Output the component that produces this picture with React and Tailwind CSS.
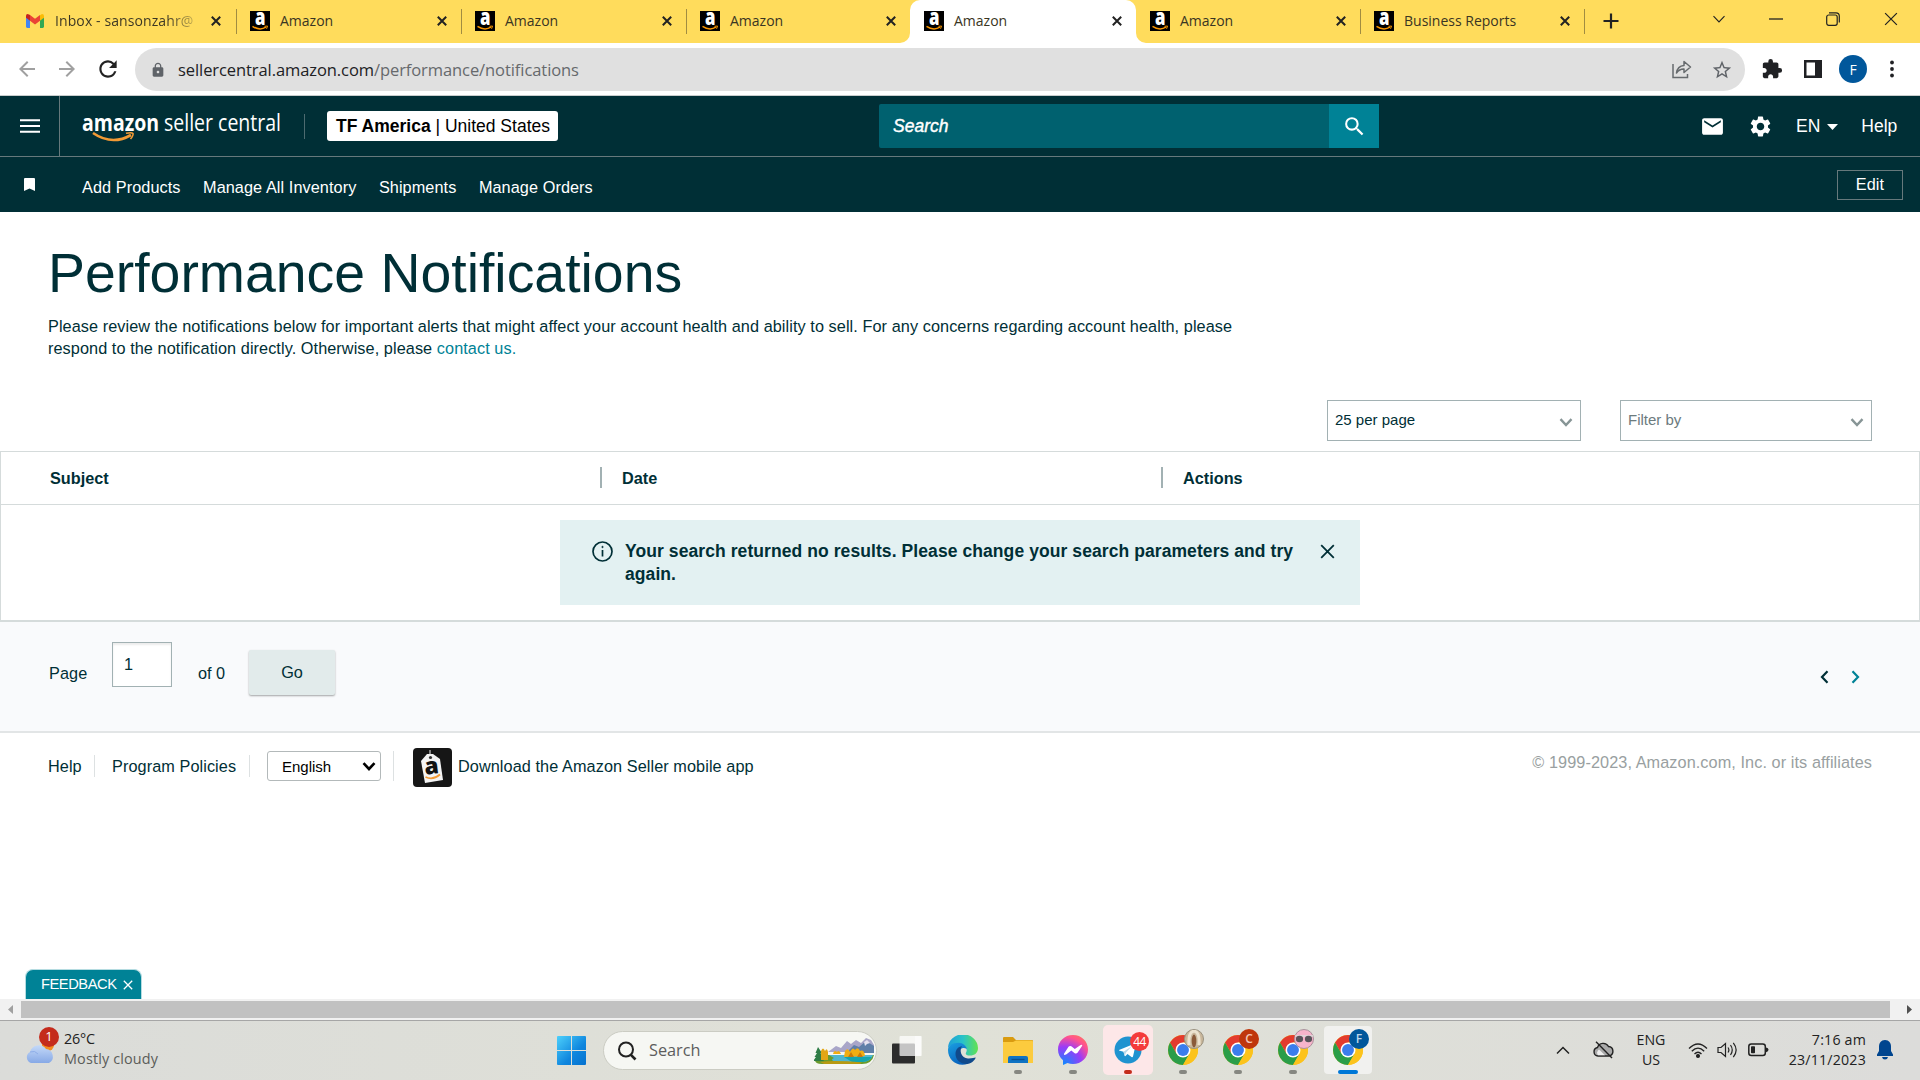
import React from 'react';
import {
  MdArrowBack,
  MdArrowForward,
  MdRefresh,
  MdLock,
  MdStarBorder,
  MdExtension,
  MdEmail,
  MdSettings,
  MdSearch,
} from 'react-icons/md';

const tabs = [
  { title: 'Amazon', width: 'w-[225px]', divider: true },
  { title: 'Amazon', width: 'w-[225px]', divider: true },
  { title: 'Amazon', width: 'w-[224px]' },
  { title: 'Amazon', width: 'w-[226px]', active: true },
  { title: 'Amazon', width: 'w-[224px]', divider: true },
  { title: 'Business Reports', width: 'w-[224px]', divider: true },
];

const quickLinks = ['Add Products', 'Manage All Inventory', 'Shipments', 'Manage Orders'];

const CloseIcon = ({ size = 10, stroke = 2, className = '' }) => (
  <svg width={size} height={size} viewBox="0 0 10 10" className={className}>
    <path d="M0.8 0.8L9.2 9.2M9.2 0.8L0.8 9.2" stroke="currentColor" strokeWidth={stroke} fill="none" />
  </svg>
);

const Chevron = ({ className = '', stroke = 2.4 }) => (
  <svg width="14" height="9" viewBox="0 0 14 9" className={className}>
    <path d="M1.5 1.2L7 7L12.5 1.2" stroke="currentColor" strokeWidth={stroke} fill="none" />
  </svg>
);

const GmailIcon = () => (
  <svg width="18" height="14" viewBox="0 0 18 14" className="shrink-0">
    <path d="M0 2V12.6Q0 14 1.3 14H4V6Z" fill="#4285f4" />
    <path d="M18 2V12.6Q18 14 16.700 14H14V6Z" fill="#34a853" />
    <path d="M14 1.300V6.700L18 3.700V2Q18 0 16 0Z" fill="#fbbc04" />
    <path d="M4 6.700V1L9 4.800L14 1V6.700L9 10.500Z" fill="#ea4335" />
    <path d="M0 2V3.700L4 6.700V1L3 .4Q0-.8 0 2Z" fill="#c5221f" />
  </svg>
);

const AmazonFavicon = () => (
  <svg width="20" height="20" viewBox="0 0 20 20" className="shrink-0 overflow-visible">
    <rect width="20" height="20" fill="#000" />
    <text x="5" y="14" textLength="10.5" lengthAdjust="spacingAndGlyphs" fontFamily="Open Sans, sans-serif" fontWeight="800" fontSize="22" fill="#fff">a</text>
    <path d="M2.500 15.300Q9.500 20 16 16.200" stroke="#f79400" strokeWidth="1.500" fill="none" />
    <path d="M14.500 15.300L17.500 15L16.600 17.800" stroke="#f79400" strokeWidth="1" fill="none" />
  </svg>
);

const ChromeIcon = () => (
  <svg width="30" height="30" viewBox="0 0 48 48">
    <circle cx="24" cy="24" r="24" fill="#fbc116" />
    <path d="M24 24L13.610 30L3.220 12A24 24 0 0 1 44.780 12H24Z" fill="#e33b2e" />
    <path d="M24 24L34.400 30L24 48A24 24 0 0 1 3.220 12L13.610 30Z" fill="#2a9d48" />
    <path d="M24 12H44.780A24 24 0 0 1 24 48L34.400 30Z" fill="#fcc31c" />
    <circle cx="24" cy="24" r="12" fill="#fff" />
    <circle cx="24" cy="24" r="9.500" fill="#3b7ded" />
  </svg>
);

const BrowserTabs = () => (
  <div className="flex h-[43px] bg-[#ffdc5c] text-[14px] text-[#3a3523]">
    <div className="flex h-[42px] w-[236px] items-center pl-[26px]">
      <GmailIcon />
      <span className="-mt-[2px] ml-[11px] w-[139px] overflow-hidden whitespace-nowrap bg-gradient-to-r from-[#3a3523] from-80% to-[#c9b050] bg-clip-text tracking-[0.1px] text-transparent">
        Inbox - sansonzahr@
      </span>
      <CloseIcon className="ml-[17px] text-[#222]" />
    </div>
    <div className="-mr-px mt-[9px] h-[25px] w-px bg-[#a18c41]" />
    {tabs.map((tab, i) => (
      <div key={i} className={`relative flex h-[43px] ${tab.width} ${tab.active ? 'rounded-t-[10px] bg-white' : ''}`}>
        {tab.active && (
          <>
            <svg width="10" height="10" className="absolute -left-[10px] bottom-0"><path d="M10 0V10H0A10 10 0 0 0 10 0Z" fill="#fff" /></svg>
            <svg width="10" height="10" className="absolute -right-[10px] bottom-0"><path d="M0 0V10H10A10 10 0 0 1 0 0Z" fill="#fff" /></svg>
          </>
        )}
        <div className="flex h-[42px] flex-1 items-center pl-[14px]">
          <AmazonFavicon />
          <span className="-mt-[2px] ml-[10px] flex-1 whitespace-nowrap">{tab.title}</span>
          <CloseIcon className="mr-[14px] text-[#222]" />
        </div>
        <div className={`-mr-px mt-[9px] h-[25px] w-px ${tab.divider ? 'bg-[#a18c41]' : ''}`} />
      </div>
    ))}
    <svg width="16" height="16" viewBox="0 0 16 16" className="ml-[19px] mt-[13px]">
      <path d="M8 0.500V15.500M0.500 8H15.500" stroke="#222" strokeWidth="2.200" />
    </svg>
    <div className="ml-auto flex h-[38px] items-center text-[#222]">
      <Chevron stroke={1.100} />
      <svg width="14" height="2" className="ml-[43px]"><path d="M0 1H14" stroke="#222" strokeWidth="1.300" /></svg>
      <svg width="14" height="14" viewBox="0 0 14 14" className="ml-[43px]" fill="none" stroke="#222" strokeWidth="1.200">
        <rect x="0.700" y="3" width="10.500" height="10.300" rx="2" />
        <path d="M3 0.800H10Q13.300 0.800 13.300 4V10.500" />
      </svg>
      <CloseIcon size={14} stroke={0.900} className="ml-[44px] mr-[22px]" />
    </div>
  </div>
);

const AddressBar = () => (
  <div className="flex h-[53px] items-start border-b border-[#c9cdcd] bg-white pt-[5px]">
    <div className="flex h-[41px] w-[135px] items-center pl-[15px]">
      <MdArrowBack size={24} className="text-[#a0a0a0]" />
      <MdArrowForward size={24} className="ml-[16px] text-[#a0a0a0]" />
      <MdRefresh size={26} className="ml-[16px] text-[#222]" />
    </div>
    <div className="flex h-[43px] w-[1610px] items-center rounded-full bg-[#e0e0e0] pl-[15px]">
      <MdLock size={16} className="text-[#5f6368]" />
      <span className="ml-[12px] mt-[1px] text-[16.5px] tracking-[-0.08px] text-[#202124]">
        sellercentral.amazon.com<span className="text-[#66696c]">/performance/notifications</span>
      </span>
      <svg width="20" height="19" viewBox="0 0 20 19" className="ml-auto" fill="none" stroke="#666a6d" strokeWidth="1.500">
        <path d="M1 4V17.500H15.500V14" />
        <path d="M4.500 13Q5.500 6 12 5.500V1.500L18.500 7L12 12.500V9Q7.500 8.800 4.500 13Z" strokeLinejoin="round" />
      </svg>
      <MdStarBorder size={22} className="ml-[19px] mr-[12px] text-[#5f6368]" />
    </div>
    <div className="flex h-[42px] items-center">
      <MdExtension size={22} className="ml-[16px] text-[#202124]" />
      <svg width="18" height="18" viewBox="0 0 18 18" className="ml-[21px]">
        <path d="M0 0H18V18H0ZM2.500 2.500V15.500H11V2.500Z" fill="#202124" fillRule="evenodd" />
      </svg>
      <div className="ml-[17px] flex size-[28px] items-center justify-center rounded-full bg-[#01579b] text-[14px] text-white">F</div>
      <svg width="4" height="18" viewBox="0 0 4 18" className="ml-[23px]" fill="#202124">
        <circle cx="2" cy="2.500" r="1.900" />
        <circle cx="2" cy="9" r="1.900" />
        <circle cx="2" cy="15.500" r="1.900" />
      </svg>
    </div>
  </div>
);

const SellerLogo = () => (
  <svg width="200" height="40" viewBox="0 0 200 40" className="shrink-0 overflow-visible">
    <text x="0" y="25" textLength="77" lengthAdjust="spacingAndGlyphs" fontFamily="Open Sans, sans-serif" fontWeight="700" fontSize="24" fill="#fff">amazon</text>
    <text x="82" y="25" textLength="117" lengthAdjust="spacingAndGlyphs" fontFamily="Open Sans, sans-serif" fontSize="24" fill="#fff">seller central</text>
    <path d="M11 27Q30 40 49 29" stroke="#f29a35" strokeWidth="2.600" fill="none" />
    <path d="M44 27.300Q50 26 51 27.500Q51.500 29.500 48.500 33" stroke="#f29a35" strokeWidth="1.600" fill="none" />
  </svg>
);

const SellerHeader = () => (
  <header className="bg-[#002f36] text-white">
    <div className="flex h-[61px] items-center border-b border-[#66797c] text-[17.5px]">
      <div className="flex h-full w-[60px] items-center border-r border-[#66797c] pl-[20px]">
        <svg width="20" height="14" viewBox="0 0 20 14"><path d="M0 1.200H20M0 7H20M0 12.800H20" stroke="#fff" strokeWidth="2" /></svg>
      </div>
      <div className="ml-[22px] h-[40px] w-[222px]"><SellerLogo /></div>
      <div className="h-[25px] w-px bg-[#4d6b70]" />
      <div className="ml-[22px] flex h-[30px] w-[231px] items-center justify-center whitespace-nowrap rounded-[3px] bg-white pl-[1px] text-black">
        <span><b>TF America</b> | United States</span>
      </div>
      <div className="ml-[321px] flex h-[44px] w-[450px] items-center rounded-l-[2px] bg-[#00616f] pl-[14px] italic [-webkit-text-stroke:0.4px_white]">Search</div>
      <div className="flex h-[44px] w-[50px] items-center justify-center bg-[#008296]"><MdSearch size={25} /></div>
      <MdEmail size={25} className="ml-[321px]" />
      <MdSettings size={25} className="ml-[23px]" />
      <span className="ml-[23px]">EN</span>
      <svg width="11" height="6" className="ml-[7px] mt-[2px]"><path d="M0 0H11L5.500 6Z" fill="#fff" /></svg>
      <span className="ml-[23px]">Help</span>
    </div>
    <div className="flex h-[55px] items-center text-[16.25px] tracking-[0.08px]">
      <svg width="11" height="13" viewBox="0 0 11 13" className="mb-[1px] ml-[24px] mr-[47px]"><path d="M1 0H10Q11 0 11 1V13L5.500 10.500L0 13V1Q0 0 1 0Z" fill="#fff" /></svg>
      <nav className="flex gap-[22.500px] pt-[5px]">
        {quickLinks.map((link) => <a key={link}>{link}</a>)}
      </nav>
      <button className="ml-auto mr-[17px] h-[30px] w-[66px] border border-[#66797c]">Edit</button>
    </div>
  </header>
);

const SelectBox = ({ label, className }) => (
  <div className={`flex h-[41px] items-center border border-[#a2b1b3] bg-white pl-[7px] text-[15px] ${className}`}>
    <span>{label}</span>
    <Chevron className="ml-auto mr-[7px] mt-[4px] text-[#879596]" />
  </div>
);

const Notifications = () => (
  <main className="text-[#002f36]">
    <div className="h-[188px] px-[48px] pt-[29px]">
      <h1 className="text-[55.4px] leading-[64px]">Performance Notifications</h1>
      <p className="mt-[10px] w-[1200px] whitespace-nowrap text-[16.25px] leading-[22px] tracking-[0.077px]">
        Please review the notifications below for important alerts that might affect your account health and ability to sell. For any concerns regarding account health, please<br />
        respond to the notification directly. Otherwise, please <a className="text-[#008296]">contact us.</a>
      </p>
    </div>
    <div className="flex h-[51px] justify-end gap-[39px] pr-[48px]">
      <SelectBox label="25 per page" className="w-[254px]" />
      <SelectBox label="Filter by" className="w-[252px] text-[#6c7b7e]" />
    </div>

    {/* Results table */}
    <div className="border border-b-2 border-[#d5dbdb]">
      <div className="flex h-[53px] border-b border-[#d5dbdb] pt-[15px] text-[16.25px] font-bold leading-[22px]">
        <div className="w-[599px] pl-[49px]">Subject</div>
        <div className="h-[21px] w-[2px] bg-[#a2b1b3]" />
        <div className="w-[559px] pl-[20px]">Date</div>
        <div className="h-[21px] w-[2px] bg-[#a2b1b3]" />
        <div className="pl-[20px]">Actions</div>
      </div>
      <div className="flex h-[115px] justify-center pt-[15px]">
        <div className="flex h-[85px] w-[800px] bg-[#e3f1f2] pl-[32px] pt-[20px]">
          <svg width="21" height="21" viewBox="0 0 21 21" className="mt-[1px] shrink-0" fill="none" stroke="#002f36">
            <circle cx="10.500" cy="10.500" r="9.500" strokeWidth="1.700" />
            <path d="M10.500 9V15.500" strokeWidth="1.700" />
            <circle cx="10.500" cy="6" r="0.700" strokeWidth="0.800" fill="#002f36" />
          </svg>
          <p className="ml-[12px] w-[695px] whitespace-nowrap text-[17.5px] font-bold leading-[23px] tracking-[0.08px]">
            Your search returned no results. Please change your search parameters and try<br />again.
          </p>
          <CloseIcon size={15} stroke={1.200} className="mt-[4px]" />
        </div>
      </div>
    </div>

    {/* Pagination */}
    <div className="flex h-[111px] items-start border-b-2 border-[#e2e5e6] bg-[#f9fafc] pl-[49px] text-[16.25px]">
      <span className="mt-[39px] w-[63px] tracking-[0.1px]">Page</span>
      <div className="mt-[20px] flex h-[45px] w-[60px] items-center border border-[#a2b1b3] bg-white pl-[11px] shadow-[inset_0_2px_2px_rgba(0,0,0,0.08)]">1</div>
      <span className="ml-[26px] mt-[39px] w-[51px]">of 0</span>
      <button className="mt-[28px] h-[45px] w-[86px] rounded-[2px] bg-[#e2ebeb] shadow-[0_1px_2px_rgba(0,0,0,0.35)]">Go</button>
      <div className="ml-auto mr-[60px] mt-[48px] flex gap-[22px]">
        <svg width="9" height="14" viewBox="0 0 9 14" fill="none" stroke="#002f36" strokeWidth="2.200"><path d="M7.500 1.200L2 7L7.500 12.800" /></svg>
        <svg width="9" height="14" viewBox="0 0 9 14" fill="none" stroke="#008296" strokeWidth="2.200"><path d="M1.500 1.200L7 7L1.500 12.800" /></svg>
      </div>
    </div>
  </main>
);

const Footer = () => (
  <footer className="flex h-[237px] items-start bg-white pl-[48px] pr-[48px] pt-[15px] text-[16.25px] leading-[36px] tracking-[0.08px] text-[#002f36]">
    <span className="w-[46px]">Help</span>
    <div className="mt-[7px] h-[22px] w-px bg-[#dde1e2]" />
    <span className="ml-[17px] w-[137px]">Program Policies</span>
    <div className="mt-[7px] h-[22px] w-px bg-[#dde1e2]" />
    <div className="ml-[17px] mt-[3px] flex h-[30px] w-[114px] items-center rounded-[3px] border border-[#b3b9ba] pl-[14px] pt-px text-[15px] tracking-normal text-black">
      English
      <Chevron className="ml-auto mr-[4px]" stroke={2.600} />
    </div>
    <div className="ml-[12px] mt-[3px] h-[30px] w-px bg-[#dde1e2]" />
    <svg width="39" height="39" viewBox="0 0 39 39" className="ml-[19px] overflow-visible">
      <rect width="39" height="39" rx="4" fill="#161616" />
      <path d="M17 2V8" stroke="#aaa" strokeWidth="1.500" />
      <path d="M14 6H20L27 11L30 32L12 35L8 13Z" fill="#f4f4f4" />
      <circle cx="17.500" cy="9.500" r="1.600" fill="#333" />
      <text x="19" y="26" textAnchor="middle" transform="rotate(-7 19 22)" fontFamily="Open Sans, sans-serif" fontWeight="800" fontSize="23" fill="#111">a</text>
      <path d="M12.500 29Q20 32.500 27 26.500" stroke="#f29a35" strokeWidth="1.700" fill="none" />
    </svg>
    <span className="ml-[6px]">Download the Amazon Seller mobile app</span>
    <span className="-mt-[4px] ml-auto text-[#999fa1]">© 1999-2023, Amazon.com, Inc. or its affiliates</span>
  </footer>
);

const HorizontalScrollbar = () => (
  <div className="flex h-[22px] items-center border-b border-[#a6a6a6] bg-[#f1f1f1]">
    <svg width="21" height="17" viewBox="0 0 21 17"><path d="M13 4V13L8 8.500Z" fill="#a0a0a0" /></svg>
    <div className="h-[17px] flex-1 bg-[#c1c1c1]" />
    <svg width="30" height="17" viewBox="0 0 30 17"><path d="M17 4V13L22 8.500Z" fill="#505050" /></svg>
  </div>
);

const SearchScenery = () => (
  <svg width="60" height="27" viewBox="0 0 60 27">
    <path d="M14 15L22 9L27 11L33 4L37 7L42 3L47 6L52 1L57 3L60 8V15Z" fill="#a9a6c8" />
    <path d="M34 14L40 8L45 10L52 4L60 9V16H34Z" fill="#5f7fa8" />
    <path d="M50 5L53 3L56 6L53 7L51 9Z" fill="#e6e2ef" />
    <path d="M4 18H60Q58 27 48 27H8Q1 27 1 23Z" fill="#6a9b2d" />
    <path d="M15 18H59Q57 25 48 25H22Q15 23 20 21Z" fill="#4fb6cf" />
    <path d="M30 20H58Q56 24 49 25H38Z" fill="#14a5ad" />
    <path d="M6 25Q20 23 48 25.500L46 27H10Z" fill="#b89a12" />
    <path d="M4 10L8 16H6.500L9 20H7L10 24H-1L2 20H0.500L3 16H1.500Z" fill="#2f7d46" />
    <path d="M7 23L7 14Q9 9 11 14Q13 10 14 15L14 23Z" fill="#e3a614" />
    <path d="M19 17Q20 12 23 15Q25 12 27 17ZM30 20L31 14Q34 10 36 15Q39 9 41 13Q44 9 46 14Q50 12 51 19Z" fill="#f0ad12" />
    <path d="M34 20L37 15L40 20ZM43 20L46 15L49 20Z" fill="#c97a0a" />
  </svg>
);

const Badge = ({ children, className }) => (
  <div className={`absolute flex items-center justify-center rounded-full ${className}`}>{children}</div>
);

const TaskItem = ({ children, tile = '', bar = 'w-[8px] bg-[#868781]' }) => (
  <div className={`relative flex h-[50px] w-[50px] items-center justify-center rounded-[5px] ${tile}`}>
    {children}
    <div className="absolute inset-x-0 bottom-[1px] flex justify-center">
      <div className={`h-[4px] rounded-full ${bar}`} />
    </div>
  </div>
);

const Taskbar = () => (
  <div className="flex h-[59px] bg-gradient-to-r from-[#dbdcd9] via-[#e0e1d7] to-[#dcdcda] text-[#222]">
    <div className="flex w-[557px] pl-[25px]">
      <div className="relative h-full w-[39px]">
        <svg width="31" height="34" viewBox="0 0 31 34" className="mt-[11px]">
          <defs>
            <linearGradient id="cloud" x1="0" y1="0" x2="0" y2="1">
              <stop offset="0" stopColor="#c4d9f8" />
              <stop offset="1" stopColor="#87a9e6" />
            </linearGradient>
          </defs>
          <circle cx="23" cy="13" r="6" fill="#f58a1f" />
          <path d="M6 31A6 6 0 0 1 5 20A9 9 0 0 1 21 17A7.500 7.500 0 0 1 24 31Z" fill="url(#cloud)" />
          <path d="M5 20Q10 18 13 22" stroke="#8eaee8" fill="none" />
        </svg>
        <Badge className="left-[14px] top-[6px] size-[20px] bg-[#c42b1c] text-[13px] text-white">1</Badge>
      </div>
      <div className="pt-[8px] text-[14.4px] leading-[20px]">
        <div className="tracking-[-0.2px]">26°C</div>
        <div className="tracking-[0.15px] text-[#5b5c59]">Mostly cloudy</div>
      </div>
    </div>
    <svg width="29" height="29" viewBox="0 0 29 29" className="mt-[15px]">
      <defs>
        <linearGradient id="win" x1="0" y1="0" x2="1" y2="1">
          <stop offset="0" stopColor="#4dd0fb" />
          <stop offset="0.600" stopColor="#0f86de" />
          <stop offset="1" stopColor="#0571cf" />
        </linearGradient>
      </defs>
      <path d="M1 0H14V14H0V1Q0 0 1 0ZM15 0H28Q29 0 29 1V14H15ZM0 15H14V29H1Q0 29 0 28ZM15 15H29V28Q29 29 28 29H15Z" fill="url(#win)" />
    </svg>
    <div className="ml-[17px] mt-[10px] flex h-[39px] w-[274px] items-center rounded-full border border-[#cbccc3] bg-[#f6f7f3] pl-[13px] pr-[2px]">
      <svg width="20" height="20" viewBox="0 0 20 20" fill="none" stroke="#222" strokeWidth="2">
        <circle cx="9" cy="8.500" r="7" />
        <path d="M13.700 13.700L18.500 18.500" strokeWidth="2.600" />
      </svg>
      <span className="ml-[12px] text-[16.3px] text-[#5d5d5d]">Search</span>
      <div className="ml-auto"><SearchScenery /></div>
    </div>
    <svg width="30" height="29" viewBox="0 0 30 29" className="ml-[15px] mt-[15px]">
      <rect x="0" y="7.500" width="23" height="20" rx="1" fill="#2c2c2c" />
      <rect x="7.500" y="0" width="22" height="20" rx="1" fill="#fff" fillOpacity="0.720" />
      <rect x="23" y="0" width="6.500" height="20" fill="#fff" fillOpacity="0.500" />
    </svg>
    <svg width="30" height="30" viewBox="0 0 30 30" className="ml-[26px] mt-[14px]">
      <defs>
        <linearGradient id="edgeTop" x1="0" y1="0.500" x2="1" y2="0.500">
          <stop offset="0" stopColor="#1f9fd9" />
          <stop offset="0.500" stopColor="#29c3c8" />
          <stop offset="1" stopColor="#63e250" />
        </linearGradient>
        <linearGradient id="edgeLeft" x1="0" y1="0" x2="0.500" y2="1">
          <stop offset="0" stopColor="#1ba0e2" />
          <stop offset="1" stopColor="#0862bd" />
        </linearGradient>
      </defs>
      <path d="M0 13.500A15 14 0 0 1 30 13C30 18 26.500 20.500 22 20.500C18 20.500 17 18.800 18.200 17.200C20 14.500 17 8.500 11 8.500C5 8.500 1 11 0 13.500Z" fill="url(#edgeTop)" />
      <path d="M0 15C0 11 4 7.800 10.500 7.800C15 7.800 18.500 11 18.800 14C15 11.500 11 14 11 18.500C11 24 16 28 20 28.800C9 32.500 0 25 0 15Z" fill="url(#edgeLeft)" />
      <path d="M7.500 19C7.500 14.500 10.500 11.500 14 11.300C11 15.500 13 23 20 23.500C24 23.700 26.500 22.500 27.500 22.600C28.300 22.800 25 28.500 19.500 29C13 29.500 7.500 25 7.500 19Z" fill="#114a8b" />
    </svg>

    {/* Pinned and running apps */}
    <div className="ml-[15px] mt-[4px] flex gap-[5px]">
      <TaskItem>
        <svg width="30" height="26" viewBox="0 0 30 26">
          <path d="M0 1Q0 0 1 0H10L13 3H29Q30 3 30 4V10H0Z" fill="#d99b10" />
          <path d="M0 5H10L13 3.500H29Q30 3.500 30 5V26H0Z" fill="#fccb3e" />
          <path d="M5 26V21Q5 19 7 19H23Q25 19 25 21V26Z" fill="#0f73c3" />
          <path d="M8.500 22.500H21.500" stroke="#0a508f" strokeWidth="1.300" />
        </svg>
      </TaskItem>
      <TaskItem>
        <svg width="30" height="30" viewBox="0 0 30 30">
          <defs>
            <radialGradient id="msgr" cx="0.200" cy="1" r="1.100">
              <stop offset="0" stopColor="#0a8cff" />
              <stop offset="0.550" stopColor="#9a3cf8" />
              <stop offset="0.850" stopColor="#ff5290" />
              <stop offset="1" stopColor="#ff6b6b" />
            </radialGradient>
          </defs>
          <path d="M15 0C6.500 0 0 6.200 0 14.500C0 18.900 1.800 22.600 5 25.300V30L9.500 28Q12 29 15 29C23.500 29 30 22.800 30 14.500S23.500 0 15 0Z" fill="url(#msgr)" />
          <path d="M6 18.800L10.500 11.700Q11.700 10.300 13.300 11.300L16.800 14L21.500 10.700Q24.500 9 24.200 10.800L19.500 17.800Q18.300 19.200 16.700 18.200L13.300 15.600L8.500 19.200Q5.500 20.800 6 18.800Z" fill="#fff" />
        </svg>
      </TaskItem>
      <TaskItem tile="bg-[#fde7e8]" bar="w-[8px] bg-[#c42b1c]">
        <svg width="28" height="28" viewBox="0 0 28 28">
          <circle cx="14" cy="14" r="13.500" fill="#1f93d0" />
          <path d="M5 14L21 7.500Q22 7.300 21.700 8.500L19 20.500Q18.600 21.700 17.500 21L13.500 18L11.500 20Q10.800 20.500 10.500 19.500L9.500 15.800L5 14.500Z" fill="#fff" />
          <path d="M9.500 15.800L18 10L12 16.500L10.800 19.800Z" fill="#bcd9ea" />
        </svg>
        <Badge className="left-[27px] top-[7px] size-[19px] bg-[#f43b3b] text-[12px] tracking-[-0.5px] text-white">44</Badge>
      </TaskItem>
      <TaskItem>
        <ChromeIcon />
        <Badge className="left-[26px] top-[4px] size-[20px] border border-[#99917f] bg-[#c9b79b]">
          <svg width="16" height="18" viewBox="0 0 16 18">
            <path d="M3 15Q2 2 8 1Q14 2 13 15" fill="none" stroke="#ece2ce" strokeWidth="3" />
            <ellipse cx="8" cy="11" rx="2.300" ry="6.500" fill="#8b5a38" />
          </svg>
        </Badge>
      </TaskItem>
      <TaskItem>
        <ChromeIcon />
        <Badge className="left-[26px] top-[4px] size-[20px] bg-[#bf360c] text-[12px] font-semibold text-[#f2c4b5]">C</Badge>
      </TaskItem>
      <TaskItem>
        <ChromeIcon />
        <Badge className="left-[26px] top-[4px] size-[20px] border border-[#a9929b] bg-[#f7b4cb]">
          <svg width="18" height="10" viewBox="0 0 18 10">
            <path d="M0 2H18" stroke="#ddd" strokeWidth="1.500" />
            <ellipse cx="4.500" cy="5" rx="3.600" ry="3.300" fill="#59545b" />
            <ellipse cx="13.500" cy="5" rx="3.600" ry="3.300" fill="#59545b" />
          </svg>
        </Badge>
      </TaskItem>
      <TaskItem tile="bg-[#f1f1ef] bg-clip-content p-[1px]" bar="w-[20px] bg-[#0078d7]">
        <ChromeIcon />
        <Badge className="left-[26px] top-[4px] size-[20px] bg-[#01579b] text-[12px] font-semibold text-[#bcd6ea]">F</Badge>
      </TaskItem>
    </div>

    {/* System tray */}
    <div className="ml-auto flex h-[58px] items-center text-[14.2px] leading-[20px]">
      <svg width="14" height="9" viewBox="0 0 14 9" fill="none" stroke="#222" strokeWidth="1.500"><path d="M1 7.500L7 1.500L13 7.500" /></svg>
      <svg width="21" height="18" viewBox="0 0 21 18" className="ml-[23px]">
        <path d="M5 15A4.300 4.300 0 0 1 4.500 6.500A6 6 0 0 1 15.500 5.500A4.800 4.800 0 0 1 16 15Z" fill="#aaa" stroke="#222" strokeWidth="1.400" />
        <path d="M5 14.300A4 4 0 0 1 6 8.500L12 14.300Z" fill="#eee" />
        <path d="M3 0.800L19 17" stroke="#222" strokeWidth="1.400" />
      </svg>
      <div className="ml-[17px] w-[40px] text-center">ENG<br />US</div>
      <svg width="20" height="17" viewBox="0 0 20 17" className="ml-[17px]" fill="none" stroke="#222" strokeWidth="1.300">
        <path d="M1 6.500Q10 -2.500 19 6.500M3.800 9.300Q10 3 16.200 9.300M6.500 12Q10 8.500 13.500 12" />
        <circle cx="10" cy="14" r="1.400" fill="#222" />
      </svg>
      <svg width="21" height="18" viewBox="0 0 21 18" className="ml-[9px]" fill="none" stroke="#222" strokeWidth="1.200">
        <path d="M1 6.500H4L8.500 2.500V15.500L4 11.500H1Z" />
        <path d="M11 6.500Q12.800 9 11 11.500M13.500 4Q17 9 13.500 14M16.300 1.800Q22 9 16.300 16.200" />
      </svg>
      <svg width="21" height="14" viewBox="0 0 21 14" className="ml-[10px]">
        <rect x="0.800" y="1" width="16.500" height="11.500" rx="2.500" fill="none" stroke="#222" strokeWidth="1.500" />
        <rect x="3" y="3.300" width="4" height="7" rx="0.800" fill="#222" />
        <path d="M18 4.500Q20.500 5 20.500 6.800T18 9.200Z" fill="#222" />
      </svg>
      <div className="w-[97px] text-right tracking-[0.2px]">7:16 am<br />23/11/2023</div>
      <svg width="16" height="20" viewBox="0 0 16 20" className="ml-[11px] mr-[27px]">
        <path d="M8 0C4 0 2 3 2 6.500V11L0 14.500V16H16V14.500L14 11V6.500C14 3 12 0 8 0Z" fill="#00458f" />
        <path d="M5 17H11Q10.500 19.500 8 19.500T5 17Z" fill="#00458f" />
      </svg>
    </div>
  </div>
);

export default function App() {
  return (
    <div className="h-[1080px] w-[1920px] overflow-hidden bg-white font-['Liberation_Sans',Arial,sans-serif]">
      <div className="font-['Open_Sans',sans-serif]">
        <BrowserTabs />
        <AddressBar />
      </div>
      <SellerHeader />
      <Notifications />
      <Footer />
      <div className="-mt-[1px] ml-[25px] flex h-[30px] w-[117px] items-center rounded-t-[8px] border border-b-0 border-[#b5dce1] bg-[#008296] pl-[15px] text-[14.7px] text-white">
        <span className="tracking-[-0.45px]">FEEDBACK</span>
        <CloseIcon stroke={1.300} className="ml-[6px]" />
      </div>
      <HorizontalScrollbar />
      <div className="font-['Open_Sans',sans-serif]">
        <Taskbar />
      </div>
    </div>
  );
}
